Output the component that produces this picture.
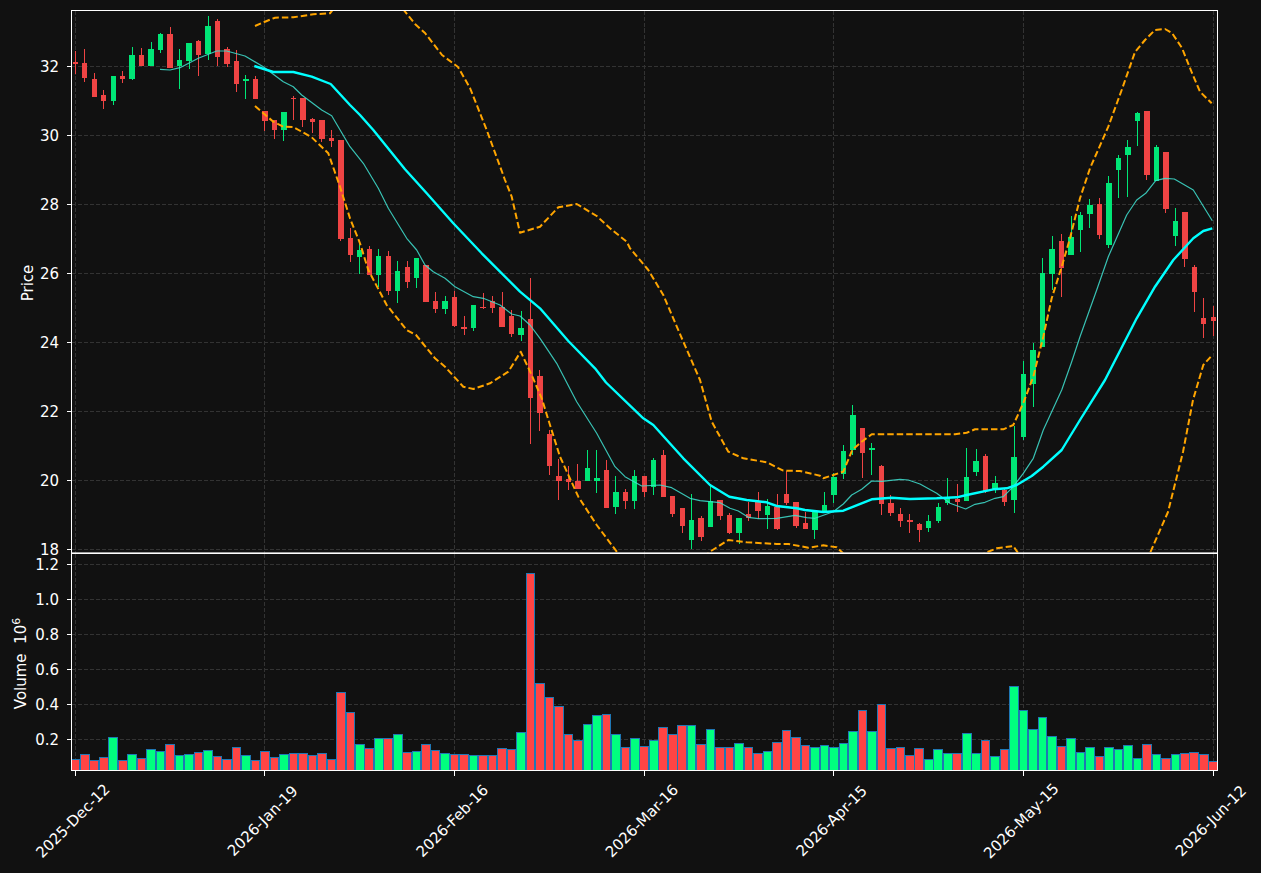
import React from "react";

const X0 = 75.3;
const STEP = 9.483;
const xAt = (i) => X0 + i * STEP;

// [wick top, wick bottom, body top, body bottom, up?] in chart pixels
const candles = [
  [51, 74, 62, 64, 0], [49.3, 82.3, 63, 77.7, 0], [73.3, 97, 79, 97, 0], [90, 109.3, 95, 100.7, 0],
  [76, 105.3, 76, 100.7, 1], [71, 83.3, 75.7, 78.7, 0], [47.3, 80.3, 55, 78.7, 1], [48.3, 66, 55, 65.7, 0],
  [42.3, 65.7, 49, 65.7, 1], [33.3, 53.3, 34, 50, 1], [26.7, 67.7, 34, 67.7, 0], [49.3, 89.3, 60, 65.7, 1],
  [43, 69, 43, 60.7, 1], [40, 75.7, 41, 55, 0], [16.3, 60.3, 26, 54.3, 1], [19, 65.7, 21, 56.7, 0],
  [46.7, 66.7, 49, 64, 0], [50, 92, 61, 83.7, 0], [74.7, 98.7, 79, 81, 1], [76.3, 99, 79, 99, 0],
  [111, 130.7, 111, 120.7, 0], [120, 138.7, 120, 130, 0], [112, 141.3, 112, 130, 1], [96, 120.3, 98, 99, 0],
  [98, 127.3, 98, 119.7, 0], [118.3, 132.7, 119, 122, 0], [120, 142.3, 120, 139, 0], [130, 146.7, 138, 141, 0],
  [140, 241.3, 140, 239, 0], [227.7, 262.3, 238, 255, 0], [243.3, 273.7, 250, 257, 1], [246, 275, 249, 275, 0],
  [249.3, 286.7, 256, 275, 1], [251, 295, 256, 291, 0], [261, 302.7, 271, 291, 1], [261, 287.7, 267, 282, 0],
  [258, 287.7, 258, 278, 1], [265, 302, 265, 302, 0], [292, 312.7, 301, 309, 0], [296, 313.7, 301, 309, 1],
  [291, 327, 297, 326, 0], [316, 334.7, 327, 329, 0], [305, 331, 305, 328, 1], [293, 308.7, 307, 308, 0],
  [296, 313, 301, 308, 0], [292, 327, 307, 327, 0], [310, 337, 316, 334, 0], [311, 341, 328, 335, 1],
  [278.3, 443.7, 319, 398, 0], [370, 430.7, 376, 413, 0], [430, 475, 433.7, 466, 0], [459, 500, 476, 481, 0],
  [466, 490, 479, 482, 0], [464, 489, 481, 489, 0], [450.3, 481, 468, 481, 1], [450.3, 492.7, 478, 481, 1],
  [460.3, 508, 470, 508, 0], [476.3, 513.7, 492, 507, 1], [489, 509, 492, 501, 0], [470, 509, 476, 501, 1],
  [476, 496.7, 476, 492, 0], [458.3, 495, 460, 487, 1], [450, 497, 455, 497, 0], [496, 517, 496, 514, 0],
  [508, 532.7, 508, 526, 0], [494, 549, 520, 540, 1], [516, 541, 518, 537, 0], [485, 527, 501, 527, 1],
  [500, 520, 500, 516, 0], [513, 534, 515, 533, 0], [518, 544, 518, 533, 1], [502, 521, 514, 518, 0],
  [492, 519, 502, 511, 0], [499, 529, 506, 515, 1], [494, 530, 507, 529, 0], [471, 505, 494, 503, 0],
  [502, 528, 502, 526, 0], [512, 529, 523, 529, 0], [512, 539, 512, 530, 1], [492.3, 513, 505, 513, 1],
  [472.7, 502.7, 477, 495, 1], [445.3, 479.3, 451, 474, 1], [405.3, 455.3, 415, 450, 1], [428, 478.3, 428, 453, 0],
  [443.3, 475, 448, 450, 1], [465, 514.7, 466, 504, 0], [495.3, 515.7, 503, 513, 0], [508.3, 526.7, 514, 521, 0],
  [514, 532.7, 520, 522, 0], [523.3, 541.7, 524, 530, 0], [515.3, 531.7, 521, 528, 1], [503.3, 522.7, 507, 521, 1],
  [478.3, 505, 498.3, 503, 1], [484.3, 511.7, 499, 502, 0], [448.3, 501, 477, 501, 1], [449.3, 476, 461, 472, 1],
  [454.3, 493.3, 456, 491, 0], [476, 493.3, 483, 490, 1], [488, 505.7, 490, 502, 0], [426, 512.7, 457, 500, 1],
  [361, 440, 374, 437, 1], [343, 407, 350, 384, 1], [258.3, 346.7, 273, 346.7, 1], [236, 290, 249, 274, 1],
  [234, 296.7, 241, 268, 0], [216, 255, 237, 255, 1], [212, 251.7, 215, 230, 1], [199.3, 228, 205, 214, 1],
  [198.3, 239, 204, 235, 0], [176, 248, 183, 245, 1], [155, 198, 158, 170, 1], [140, 196.7, 147, 155, 1],
  [112, 146, 113, 121, 1], [111, 180, 111, 175, 0], [145, 181, 147, 181, 1], [152, 213, 152, 209, 0],
  [208, 246, 221, 236, 1], [212, 266.7, 212, 259, 0], [265, 312, 267, 292, 0], [298, 338, 318, 324, 0],
  [306, 336, 317, 321, 0],
];

// bar top in chart pixels, same order as candles
const volumes = [
  759.3, 754.3, 760.3, 757.3, 737.3, 760.3, 754.3, 758.3, 749.3, 751.3, 744.3, 755.3, 754.3, 752.3, 750.3, 756.3,
  759.3, 747.3, 755.3, 760.3, 751.3, 757.3, 754.3, 753.3, 753.3, 755.3, 753.3, 759.3, 692.3, 712.3, 744.3, 748.3,
  738.3, 738.3, 734.3, 752.3, 751.3, 744.3, 750.3, 753.3, 754.3, 754.3, 755.3, 755.3, 755.3, 748.3, 749.3, 732.3,
  573.3, 683.3, 697.3, 706.3, 734.3, 740.3, 724.3, 715.3, 714.3, 734.3, 747.3, 738.3, 746.3, 740.3, 727.3, 734.3,
  725.3, 725.3, 744.3, 729.3, 747.3, 747.3, 743.3, 747.3, 753.3, 751.3, 742.3, 730.3, 737.3, 745.3, 747.3, 745.3,
  747.3, 743.3, 731.3, 710.3, 731.3, 704.3, 748.3, 747.3, 755.3, 748.3, 759.3, 749.3, 753.3, 753.3, 733.3, 753.3,
  740.3, 756.3, 749.3, 686.3, 710.3, 729.3, 717.3, 736.3, 746.3, 738.3, 752.3, 747.3, 756.3, 747.3, 749.3, 745.3,
  758.3, 744.3, 754.3, 758.3, 754.3, 753.3, 752.3, 754.3, 761.3,
];

const sma20 = "160,69.3 170,70 180,67.7 198.3,58.3 216.7,51 226.7,51 245,56 263.3,66.7 283.3,81.7 293.3,86.7 301.7,95 321.7,110 331.7,115.7 350,146.7 363.3,163.3 378.3,188.3 388.3,208.3 406.7,238.3 416.7,250 425,265 433.3,271.7 445,278.3 455,286.7 473.3,296.7 483.3,298.3 500,305 511.7,314 520,316 530,325 540,338.3 556.7,363.3 576.7,401.7 596.7,433.3 615,466.7 625,476.7 641.7,486 660,485 671.7,487.7 690,498.3 700,500.7 720,502.7 730,508.3 738.3,511 748.3,517.3 758.3,518.7 776.7,518.3 795,515.3 806.7,517.7 815,518.3 833.3,511.7 843.3,504 851.7,495 861.7,489.3 871.7,481 881.7,481.3 900,479.3 908.3,480 920,484 936.7,493.3 950,503.3 965.7,509 975,504.3 985,502.3 995,498.3 1003.3,496.7 1013.3,486.7 1023.3,473.3 1033.3,458.3 1043.3,430 1061.7,390 1071.7,361.7 1080,336.7 1096.7,290 1108.3,256.7 1126.7,215 1136.7,200 1145.7,193.3 1155.7,180.7 1165,178.3 1174.3,179 1193.3,190 1212.3,220.7";

const sma50 = "254.3,66 273.3,72 293.3,72 311.7,76.7 330.7,84 350,105 360,115 373.3,130 405,169.3 426.7,193.3 453.3,223.3 481.7,253.3 520,291.7 540,308.3 568.3,341 595,368.3 606,382.5 643.3,418.3 653.3,425 683.3,458.3 710,485 729.3,496.7 746.7,500 766.7,502.3 776.7,506 796.7,508.3 805,510 823.3,512 843.3,510.7 871.7,499.3 891.7,497.7 910,499 936.7,498.3 956.7,497.3 966.7,495 993.3,489.3 1006.7,488.3 1016.7,485 1031.7,476 1043.3,466.7 1061.7,450 1080,420 1105,380 1136.7,318.3 1155,286.7 1173.3,260 1193.3,238.3 1203.3,231 1212.3,228.3";

const upperBand = "255,26 265,21.7 275,17.7 293.3,17.3 313.3,14.3 330,13.3 333.3,9 403,9 415,24 425,33 442,55 458,67 470,88 486.7,130 505,180 511.7,196.7 520,232.7 540,226.7 558.3,207.3 576.7,204 596.7,216 610,228.3 626.7,241.7 630,248.3 648.3,270 663.3,295 683.3,341.7 700,380 711.7,421.7 728.3,451.7 743.3,458.3 766.7,462.3 783.3,470.7 800,471 820,475.7 823.3,478.3 843.3,471.7 852.3,450 861.7,441.7 871.7,434.3 890,434.3 955,434.3 966.7,432.7 975,429.3 1003.3,429.3 1013.3,425 1023.3,403 1033.3,376.7 1043.3,336.7 1051.7,298.3 1061.7,266.7 1070,238.3 1080,198.3 1090,168.3 1108.3,126.7 1121.7,90 1135,52 1145,40 1155,30 1165,29 1172,33 1182,48 1192,73 1200,91.7 1211.7,103.3";

const lowerBand = "255,106 273.3,121.7 283.3,126.7 293.3,127 311.7,137.3 328.3,153.3 340,186.7 350,218.3 360,243.3 368.3,270 386.7,305 406.7,330 416,335 435,358.3 445,366.7 463.3,386.7 473.3,389 490,383.3 508.3,371.7 520.7,351.7 531.7,375 541.7,398.3 550,425 560,456.7 578.3,496.7 596.7,525 620,556 705,556 710,551.7 728.3,540 746.7,542.3 776.7,544 788.3,544 808.3,547.7 823.3,545.3 836.7,547.3 846,556 980,556 985,553 996.7,548.3 1013.3,546 1020,556 1147,556 1150,553 1168,512 1183,452 1193,400 1203.3,365 1211.7,355.7";

const priceTicks = [
  ["32", 66.3], ["30", 135.3], ["28", 204.3], ["26", 273.4], ["24", 342.5], ["22", 411.5], ["20", 480.5], ["18", 549.5],
];
const volumeTicks = [
  ["1.2", 564.3], ["1.0", 599.3], ["0.8", 634.4], ["0.6", 669.5], ["0.4", 704.5], ["0.2", 739.5],
];
const dateTicks = [
  ["2025-Dec-12", 0], ["2026-Jan-19", 20], ["2026-Feb-16", 40], ["2026-Mar-16", 60],
  ["2026-Apr-15", 80], ["2026-May-15", 100], ["2026-Jun-12", 120],
];

const LEFT = 71.5;
const RIGHT = 1217.5;
const TOP = 10.5;
const MID = 553.5;
const BOTTOM = 770.5;

const App = () => {
  return (
    <div className="w-[1261px] h-[873px] bg-[#111111] overflow-hidden">
      <svg
        width="1261"
        height="873"
        viewBox="0 0 1261 873"
        className="block font-['DejaVu_Sans',sans-serif]"
      >
        <defs>
          <clipPath id="price-clip">
            <rect x={LEFT} y={TOP} width={RIGHT - LEFT} height={MID - 1 - TOP} />
          </clipPath>
          <clipPath id="volume-clip">
            <rect x={LEFT} y={MID} width={RIGHT - LEFT} height={BOTTOM - MID} />
          </clipPath>
        </defs>

        {/* grid */}
        <g className="stroke-[#333333]" strokeWidth="1" strokeDasharray="4 2" shapeRendering="crispEdges">
          {priceTicks.map(([label, y]) => (
            <line key={label} x1={LEFT} x2={RIGHT} y1={y} y2={y} />
          ))}
          {volumeTicks.map(([label, y]) => (
            <line key={label} x1={LEFT} x2={RIGHT} y1={y} y2={y} />
          ))}
          {dateTicks.map(([label, i]) => (
            <g key={label}>
              <line x1={xAt(i)} x2={xAt(i)} y1={TOP} y2={MID} />
              <line x1={xAt(i)} x2={xAt(i)} y1={MID} y2={BOTTOM} />
            </g>
          ))}
        </g>

        {/* candles */}
        <g clipPath="url(#price-clip)" shapeRendering="crispEdges">
          {candles.map(([wt, wb, bt, bb, up], i) => (
            <g key={i} className={up ? "fill-[#00e676] stroke-[#00e676]" : "fill-[#ef4444] stroke-[#ef4444]"}>
              <line x1={xAt(i)} x2={xAt(i)} y1={wt} y2={wb} strokeWidth="1" />
              <rect x={xAt(i) - 2.7} y={bt} width="5.4" height={bb - bt} stroke="none" />
            </g>
          ))}
        </g>

        {/* moving averages and bands */}
        <g clipPath="url(#price-clip)" fill="none" strokeLinejoin="round">
          <polyline points={sma20} className="stroke-[#40e0d0]" strokeWidth="1.2" strokeOpacity="0.85" />
          <polyline points={sma50} className="stroke-[#00ffff]" strokeWidth="2.4" />
          <polyline points={upperBand} className="stroke-[#ffa500]" strokeWidth="2" strokeDasharray="6.5 3" />
          <polyline points={lowerBand} className="stroke-[#ffa500]" strokeWidth="2" strokeDasharray="6.5 3" />
        </g>

        {/* volume */}
        <g clipPath="url(#volume-clip)" className="stroke-[#1f77b4]" strokeWidth="1" shapeRendering="crispEdges">
          {volumes.map((top, i) => (
            <rect
              key={i}
              x={xAt(i) - 4.3}
              y={top}
              width="8.6"
              height={BOTTOM + 4 - top}
              className={candles[i][4] ? "fill-[#00ff7f]" : "fill-[#ff4444]"}
            />
          ))}
        </g>

        {/* frames */}
        <g fill="none" className="stroke-white" strokeWidth="1" shapeRendering="crispEdges">
          <rect x={LEFT} y={TOP} width={RIGHT - LEFT} height={MID - 1 - TOP} strokeOpacity="0.6" />
          <rect x={LEFT} y={MID} width={RIGHT - LEFT} height={BOTTOM - MID} />
          <polyline points={`${LEFT},${MID} ${LEFT},${TOP} ${RIGHT},${TOP} ${RIGHT},${MID}`} />
        </g>

        {/* axis ticks and labels */}
        <g className="stroke-white" strokeWidth="1" shapeRendering="crispEdges">
          {priceTicks.concat(volumeTicks).map(([label, y]) => (
            <line key={label} x1={LEFT - 5} x2={LEFT} y1={y} y2={y} />
          ))}
          {dateTicks.map(([label, i]) => (
            <line key={label} x1={xAt(i)} x2={xAt(i)} y1={BOTTOM} y2={BOTTOM + 5} />
          ))}
        </g>
        <g className="fill-white text-[15px]">
          {priceTicks.concat(volumeTicks).map(([label, y]) => (
            <text key={label} x={59} y={y + 5.5} textAnchor="end">
              {label}
            </text>
          ))}
          {dateTicks.map(([label, i]) => (
            <text
              key={label}
              x={0}
              y={0}
              textAnchor="middle"
              dominantBaseline="central"
              transform={`translate(${xAt(i) - 2.3} 821) rotate(-45)`}
            >
              {label}
            </text>
          ))}
          <text textAnchor="middle" transform="translate(32.5 283) rotate(-90)">
            Price
          </text>
          <text textAnchor="middle" transform="translate(25.5 663.5) rotate(-90)">
            Volume{"\u00a0\u00a0"}10
            <tspan dy="-6" className="text-[11px]">
              6
            </tspan>
          </text>
        </g>
      </svg>
    </div>
  );
};

export default App;
